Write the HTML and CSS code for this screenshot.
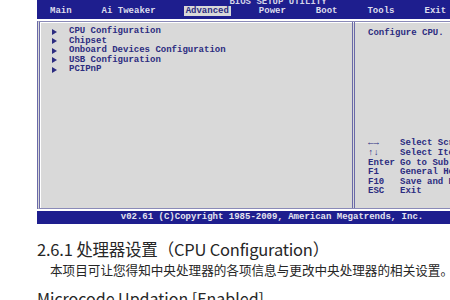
FILE: index.html
```html
<!DOCTYPE html>
<html>
<head>
  <title>BIOS Advanced - CPU Configuration</title>
  <link rel="stylesheet" href="styles.css">
</head>
<body>
  <div class="bios">
    <div class="top">
      <div class="title">BIOS SETUP UTILITY</div>
      <div class="menu">
        <span class="item">Main</span>
        <span class="item">Ai Tweaker</span>
        <span class="item active">Advanced</span>
        <span class="item">Power</span>
        <span class="item">Boot</span>
        <span class="item">Tools</span>
        <span class="item">Exit</span>
      </div>
    </div>
    <div class="panel">
      <div class="list">
        <div class="row"><svg class="arrow" viewBox="0 0 5 6"><path d="M0 0L5 3L0 6Z"/></svg>CPU Configuration</div>
        <div class="row"><svg class="arrow" viewBox="0 0 5 6"><path d="M0 0L5 3L0 6Z"/></svg>Chipset</div>
        <div class="row"><svg class="arrow" viewBox="0 0 5 6"><path d="M0 0L5 3L0 6Z"/></svg>Onboard Devices Configuration</div>
        <div class="row"><svg class="arrow" viewBox="0 0 5 6"><path d="M0 0L5 3L0 6Z"/></svg>USB Configuration</div>
        <div class="row"><svg class="arrow" viewBox="0 0 5 6"><path d="M0 0L5 3L0 6Z"/></svg>PCIPnP</div>
      </div>
      <div class="help">
        <div class="desc">Configure CPU.</div>
        <div class="keys">
          <div class="key"><span class="k">&larr;&rarr;</span>Select Screen</div>
          <div class="key"><span class="k">&uarr;&darr;</span>Select Item</div>
          <div class="key"><span class="k">Enter</span>Go to Sub Screen</div>
          <div class="key"><span class="k">F1</span>General Help</div>
          <div class="key"><span class="k">F10</span>Save and Exit</div>
          <div class="key"><span class="k">ESC</span>Exit</div>
        </div>
      </div>
    </div>
    <div class="footer">v02.61 (C)Copyright 1985-2009, American Megatrends, Inc.</div>
  </div>

  <div class="doc">
    <h2>2.6.1 处理器设置（CPU Configuration）</h2>
    <p class="intro">本项目可让您得知中央处理器的各项信息与更改中央处理器的相关设置。</p>
    <p class="option">Microcode Updation [Enabled]</p>
  </div>
</body>
</html>
```

FILE: styles.css
```css
body {
  margin: 0;
  background: #fff;
  overflow: hidden;
  width: 450px;
  height: 300px;
}

.bios {
  width: 482px;
  margin-left: 37px;
  font-family: "Liberation Mono", "DejaVu Sans Mono", monospace;
  font-weight: bold;
  font-size: 9px;
  color: #2c2c80;
}

.top {
  height: 19px;
  background: #1e1e8e;
  overflow: hidden;
}

.title {
  height: 5px;
  line-height: 6px;
  margin-top: -1px;
  text-align: center;
  color: #d4d4e8;
  overflow: hidden;
}

.menu {
  display: flex;
  gap: 26px;
  padding: 2px 0 0 11px;
  line-height: 10px;
}

.menu .item {
  padding: 0 2px;
  color: #dcdcec;
}

.menu .item.active {
  background: #d8d8d8;
  color: #2c2c80;
}

.panel {
  display: grid;
  grid-template-columns: 315px 1fr;
  height: 186px;
  margin-top: 2px;
  background: #d9d9d9;
  border: 1px solid #8a8ab8;
  border-left: 3px double #6a6aa8;
  box-shadow: inset 1px 1px 0 #fff;
}

.list {
  padding: 5px 0 0 12px;
  border-right: 3px double #6a6aa8;
}

.row {
  display: flex;
  align-items: center;
  height: 9.5px;
  line-height: 9.5px;
}

.arrow {
  width: 5px;
  height: 6px;
  margin-right: 12px;
  fill: #2c2c80;
}

.help {
  display: flex;
  flex-direction: column;
  justify-content: space-between;
  padding: 6px 0 11px 13px;
}

.keys {
  line-height: 9.6px;
  white-space: nowrap;
}

.key .k {
  display: inline-block;
  width: 32px;
  text-align: left;
}

.footer {
  height: 13px;
  line-height: 13px;
  margin-top: 2px;
  background: #1e1e8e;
  color: #e4e4f0;
  text-align: center;
  padding-right: 12px;
}

.doc {
  padding-left: 37px;
  font-family: "Noto Sans CJK SC", "Noto Sans", sans-serif;
  color: #262626;
}

.doc h2 {
  margin: 14px 0 0;
  font-size: 16.5px;
  font-weight: normal;
  line-height: 22px;
  letter-spacing: -0.2px;
}

.doc .intro {
  margin: 2px 0 0 13px;
  font-size: 12.6px;
  line-height: 16px;
  white-space: nowrap;
}

.doc .option {
  margin: 10px 0 0;
  font-size: 16px;
  line-height: 20px;
}
```
